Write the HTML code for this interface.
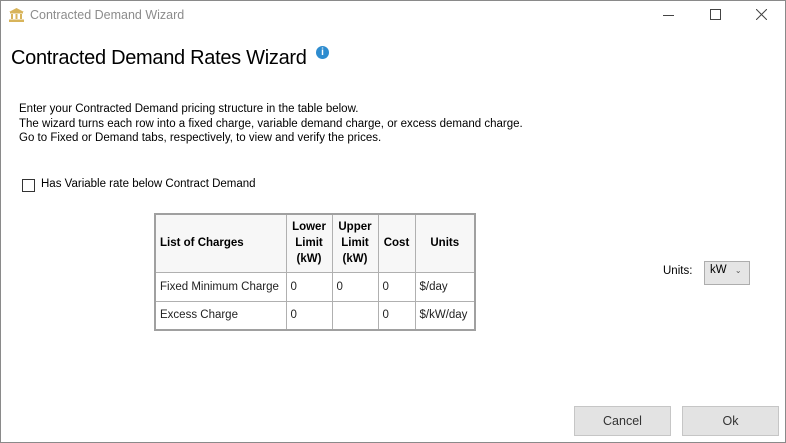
<!DOCTYPE html>
<html><head><style>
*{margin:0;padding:0;box-sizing:border-box}
body{width:786px;height:443px;background:#fff;font-family:"Liberation Sans",sans-serif;position:relative;overflow:hidden;color:#000}
.frame{position:absolute;left:0;top:0;width:786px;height:443px;border:1px solid #8a8a8a}
.a{position:absolute;white-space:nowrap}
table{position:absolute;left:154px;top:213px;border-collapse:collapse;border:2px solid #a0a0a0;font-size:11.5px}
td,th{border:1px solid #b0b0b0;padding:0 4px}
th{background:#f7f7f7;font-weight:bold;height:58px;text-align:center;line-height:16px}
td{height:29px;color:#222}
.btn{position:absolute;top:406px;width:97px;height:30px;background:#e3e3e3;border:1px solid #c6c6c6;font-size:12.5px;color:#333;text-align:center;line-height:28px}
</style></head><body>
<div class="frame"></div>
<svg class="a" style="left:9px;top:8px" width="15" height="14" viewBox="0 0 15 14"><path d="M7.5 0L0 4h15z" fill="#d8b45a"/><rect x="1" y="4" width="13" height="1.5" fill="#d8b45a"/><rect x="2" y="6" width="2" height="5" fill="#d8b45a"/><rect x="6.5" y="6" width="2" height="5" fill="#d8b45a"/><rect x="11" y="6" width="2" height="5" fill="#d8b45a"/><rect x="0" y="11.5" width="15" height="2.5" fill="#d8b45a"/></svg>
<div class="a" style="left:30px;top:8px;font-size:12.5px;color:#8c8c8c">Contracted Demand Wizard</div>
<div class="a" style="left:663px;top:15px;width:11px;height:1px;background:#444"></div>
<div class="a" style="left:710px;top:9px;width:11px;height:11px;border:1px solid #444"></div>
<svg class="a" style="left:756px;top:9px" width="11" height="11"><path d="M0 0L11 11M11 0L0 11" stroke="#444"/></svg>
<div class="a" style="left:11px;top:47px;font-size:20px;letter-spacing:-0.3px">Contracted Demand Rates Wizard</div>
<div class="a" style="left:316px;top:46px;width:13px;height:13px;border-radius:50%;background:#2e8ccf;color:#fff;font-size:10px;font-weight:bold;text-align:center;line-height:13px">i</div>
<div class="a" style="left:19px;top:102px;font-size:11.5px;line-height:14.5px">Enter your Contracted Demand pricing structure in the table below.<br>The wizard turns each row into a fixed charge, variable demand charge, or excess demand charge.<br>Go to Fixed or Demand tabs, respectively, to view and verify the prices.</div>
<div class="a" style="left:22px;top:179px;width:13px;height:13px;border:1px solid #333"></div>
<div class="a" style="left:41px;top:178px;font-size:11.5px">Has Variable rate below Contract Demand</div>
<table>
<tr><th style="width:131px;text-align:left">List of Charges</th><th style="width:46px">Lower<br>Limit<br>(kW)</th><th style="width:46px">Upper<br>Limit<br>(kW)</th><th style="width:37px">Cost</th><th style="width:60px">Units</th></tr>
<tr><td>Fixed Minimum Charge</td><td>0</td><td>0</td><td>0</td><td>$/day</td></tr>
<tr><td>Excess Charge</td><td>0</td><td></td><td>0</td><td>$/kW/day</td></tr>
</table>
<div class="a" style="left:663px;top:265px;font-size:11.5px">Units:</div>
<div class="a" style="left:704px;top:261px;width:46px;height:24px;background:#e5e5e5;border:1px solid #adadad;font-size:11.5px;padding:2px 0 0 5px">kW <span style="font-size:8px;margin-left:5px;color:#555">&#8964;</span></div>
<div class="btn" style="left:574px">Cancel</div>
<div class="btn" style="left:682px">Ok</div>
</body></html>
